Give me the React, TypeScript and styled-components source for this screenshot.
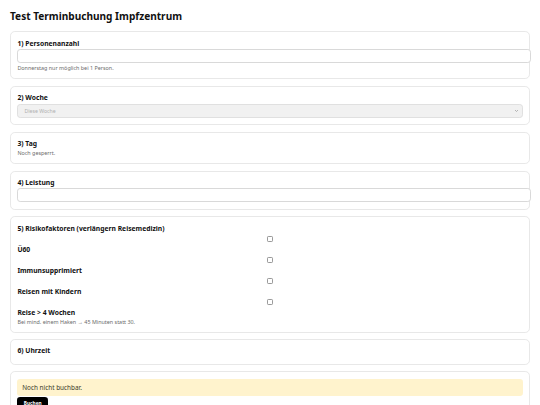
import styled, { createGlobalStyle } from "styled-components";

const GlobalStyles = createGlobalStyle`
  * {
    margin: 0;
    padding: 0;
    box-sizing: border-box;
  }
  body {
    background: #ffffff;
    font-family: "Noto Sans", "Open Sans", sans-serif;
    color: #111111;
  }
`;

const Page = styled.div`
  padding: 10px 10px 0 10px;
  display: flex;
  flex-direction: column;
  gap: 6.4px;
`;

const Title = styled.h1`
  font-size: 10.1px;
  line-height: 13px;
  font-weight: 700;
  margin-bottom: 2px;
`;

const Card = styled.section`
  border: 1px solid #e8e8e8;
  border-radius: 4.8px;
  padding: 6.4px;
  display: flex;
  flex-direction: column;
`;

const Label = styled.div`
  font-size: 6.75px;
  line-height: 9px;
  font-weight: 700;
`;

const TextInput = styled.div`
  margin-top: 1.6px;
  height: 14px;
  width: calc(100% + 8px);
  border: 1px solid #d9d9d9;
  border-radius: 3.2px;
  background: #ffffff;
`;

const Select = styled.div`
  margin-top: 1.6px;
  height: 14px;
  border: 1px solid #e0e0e0;
  border-radius: 3.2px;
  background: #f1f1f1;
  display: flex;
  align-items: center;
  justify-content: space-between;
  padding: 0 3px 0 6px;
  font-size: 5.2px;
  color: #b0b0b0;
`;

const Hint = styled.div`
  margin-top: 2px;
  font-size: 5.4px;
  line-height: 6.7px;
  color: #6b6b6b;
`;

const Option = styled.label`
  display: flex;
  flex-direction: column;
  margin-top: 0.8px;
`;

const Check = styled.input`
  appearance: none;
  display: block;
  width: 5.2px;
  height: 5.2px;
  margin: 3px auto;
  border: 0.8px solid #9a9a9a;
  border-radius: 1.2px;
  background: #ffffff;
`;

const Spacer = styled.div`
  height: 2px;
`;

const Alert = styled.div`
  background: #fff3cd;
  border-radius: 3.2px;
  padding: 0 4.8px;
  height: 17px;
  display: flex;
  align-items: center;
  font-size: 6.4px;
  color: #3a3a2a;
`;

const Button = styled.button`
  align-self: flex-start;
  margin-top: 1px;
  background: #000000;
  color: #ffffff;
  border: none;
  border-radius: 3.2px;
  font-family: "Noto Sans", sans-serif;
  font-size: 4.8px;
  font-weight: 700;
  padding: 3.6px 6.4px;
`;

const options = ["Ü60", "Immunsupprimiert", "Reisen mit Kindern", "Reise > 4 Wochen"];

function Chevron() {
  return (
    <svg width="5" height="4" viewBox="0 0 10 8">
      <path d="M2 2 L5 5 L8 2" fill="none" stroke="#9a9a9a" strokeWidth="1.4" />
    </svg>
  );
}

export default function App() {
  return (
    <>
      <GlobalStyles />
      <Page>
        <Title>Test Terminbuchung Impfzentrum</Title>
        <Card>
          <Label>1) Personenanzahl</Label>
          <TextInput />
          <Hint>Donnerstag nur möglich bei 1 Person.</Hint>
        </Card>
        <Card>
          <Label>2) Woche</Label>
          <Select>
            <span>Diese Woche</span>
            <Chevron />
          </Select>
        </Card>
        <Card>
          <Label>3) Tag</Label>
          <Hint>Noch gesperrt.</Hint>
        </Card>
        <Card>
          <Label>4) Leistung</Label>
          <TextInput />
        </Card>
        <Card>
          <Label>5) Risikofaktoren (verlängern Reisemedizin)</Label>
          {options.map((o) => (
            <Option key={o}>
              <Check type="checkbox" />
              <Label>{o}</Label>
            </Option>
          ))}
          <Hint>Bei mind. einem Haken → 45 Minuten statt 30.</Hint>
        </Card>
        <Card>
          <Label>6) Uhrzeit</Label>
          <Spacer />
        </Card>
        <Card>
          <Alert>Noch nicht buchbar.</Alert>
          <Button>Buchen</Button>
        </Card>
      </Page>
    </>
  );
}
